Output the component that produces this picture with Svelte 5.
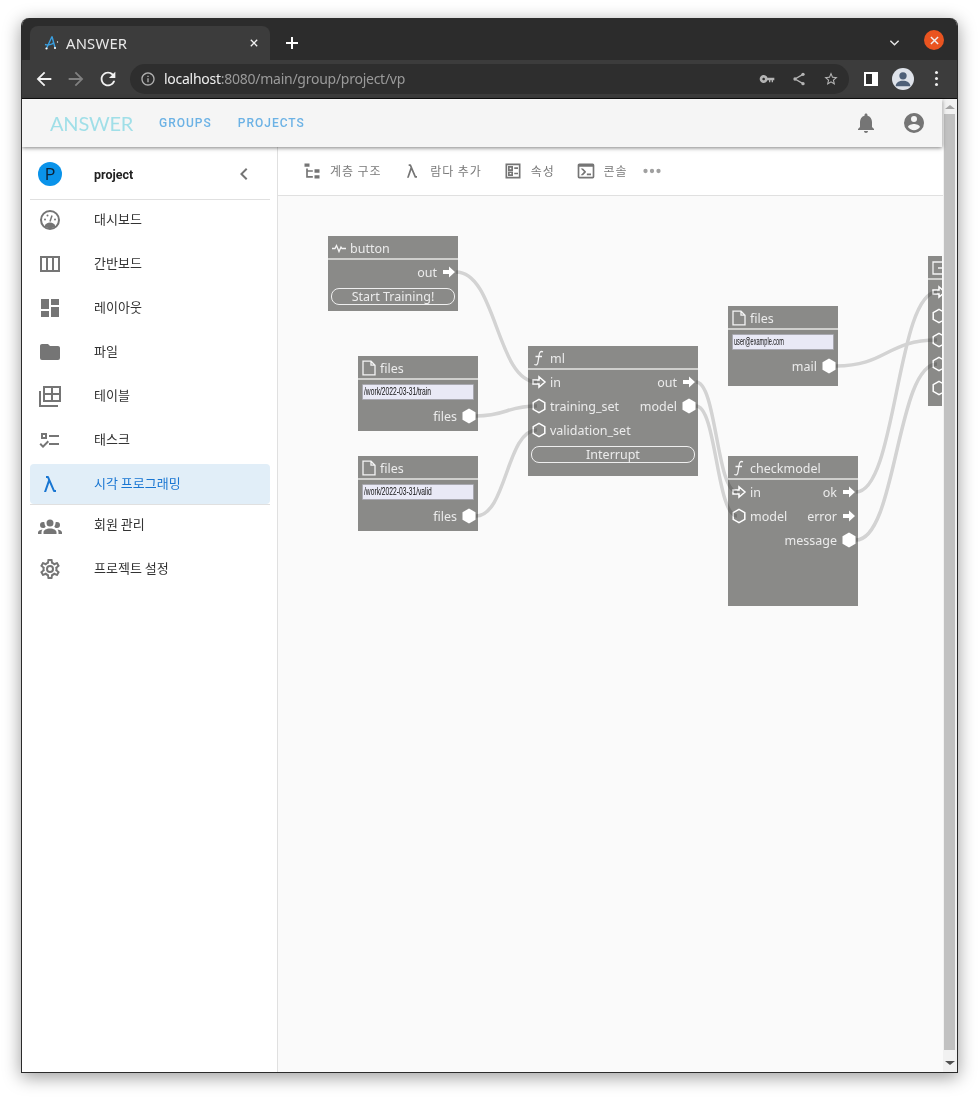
<script>
  const menu = [
    { label: '대시보드', icon: 'gauge' },
    { label: '간반보드', icon: 'columns' },
    { label: '레이아웃', icon: 'layout' },
    { label: '파일', icon: 'folder' },
    { label: '테이블', icon: 'table' },
    { label: '태스크', icon: 'tasks' }
  ];

  const paths = {
    layout: 'M13,3V9H21V3M13,21H21V11H13M3,21H11V15H3M3,13H11V3H3V13Z',
    folder: 'M10,4H4C2.89,4 2,4.89 2,6V18A2,2 0 0,0 4,20H20A2,2 0 0,0 22,18V8C22,6.89 21.1,6 20,6H12L10,4Z',
    tasks: 'M3,5H9V11H3V5M5,7V9H7V7H5M11,7H21V9H11V7M11,15H21V17H11V15M5,20L1.5,16.5L2.91,15.09L5,17.17L9.59,12.59L11,14L5,20Z',
    lambda: 'M6,20L10.16,7.91L9.34,6H8V4H10C10.42,4 10.78,4.26 10.93,4.63L16.66,18H18V20H16C15.57,20 15.21,19.73 15.07,19.36L11.33,10.65L8.12,20H6Z',
    group: 'M12,5.5A3.5,3.5 0 0,1 15.5,9A3.5,3.5 0 0,1 12,12.5A3.5,3.5 0 0,1 8.5,9A3.5,3.5 0 0,1 12,5.5M5,8C5.56,8 6.08,8.15 6.53,8.42C6.38,9.85 6.8,11.27 7.66,12.38C7.16,13.34 6.16,14 5,14A3,3 0 0,1 2,11A3,3 0 0,1 5,8M19,8A3,3 0 0,1 22,11A3,3 0 0,1 19,14C17.84,14 16.84,13.34 16.34,12.38C17.2,11.27 17.62,9.85 17.47,8.42C17.92,8.15 18.44,8 19,8M5.5,18.25C5.5,16.18 8.41,14.5 12,14.5C15.59,14.5 18.5,16.18 18.5,18.25V20H5.5V18.25M0,20V18.5C0,17.11 1.89,15.94 4.45,15.6C3.86,16.28 3.5,17.22 3.5,18.25V20H0M24,20H20.5V18.25C20.5,17.22 20.14,16.28 19.55,15.6C22.11,15.94 24,17.11 24,18.5V20Z',
    cog: 'M12,8A4,4 0 0,1 16,12A4,4 0 0,1 12,16A4,4 0 0,1 8,12A4,4 0 0,1 12,8M12,10A2,2 0 0,0 10,12A2,2 0 0,0 12,14A2,2 0 0,0 14,12A2,2 0 0,0 12,10M10,22C9.75,22 9.54,21.82 9.5,21.58L9.13,18.93C8.5,18.68 7.96,18.34 7.44,17.94L4.95,18.95C4.73,19.03 4.46,18.95 4.34,18.73L2.34,15.27C2.21,15.05 2.27,14.78 2.46,14.63L4.57,12.97L4.5,12L4.57,11L2.46,9.37C2.27,9.22 2.21,8.95 2.34,8.73L4.34,5.27C4.46,5.05 4.73,4.96 4.95,5.05L7.44,6.05C7.96,5.66 8.5,5.32 9.13,5.07L9.5,2.42C9.54,2.18 9.75,2 10,2H14C14.25,2 14.46,2.18 14.5,2.42L14.87,5.07C15.5,5.32 16.04,5.66 16.56,6.05L19.05,5.05C19.27,4.96 19.54,5.05 19.66,5.27L21.66,8.73C21.79,8.95 21.73,9.22 21.54,9.37L19.43,11L19.5,12L19.43,13L21.54,14.63C21.73,14.78 21.79,15.05 21.66,15.27L19.66,18.73C19.54,18.95 19.27,19.04 19.05,18.95L16.56,17.95C16.04,18.34 15.5,18.68 14.87,18.93L14.5,21.58C14.46,21.82 14.25,22 14,22H10M11.25,4L10.88,6.61C9.68,6.86 8.62,7.5 7.85,8.39L5.44,7.35L4.69,8.65L6.8,10.2C6.4,11.37 6.4,12.64 6.8,13.8L4.68,15.36L5.43,16.66L7.86,15.62C8.63,16.5 9.68,17.14 10.87,17.38L11.24,20H12.76L13.13,17.39C14.32,17.14 15.37,16.5 16.14,15.62L18.57,16.66L19.32,15.36L17.2,13.81C17.6,12.64 17.6,11.37 17.2,10.2L19.31,8.65L18.56,7.35L16.15,8.39C15.38,7.5 14.32,6.86 13.12,6.62L12.75,4H11.25Z',
    tree: 'M3,3H9V7H3V3M15,10H21V14H15V10M15,17H21V21H15V17M13,13H7V18H13V20H7L5,20V9H7V11H13V13Z',
    console: 'M20,19V7H4V19H20M20,3A2,2 0 0,1 22,5V19A2,2 0 0,1 20,21H4A2,2 0 0,1 2,19V5C2,3.89 2.9,3 4,3H20M13,17V15H18V17H13M9.58,13L5.57,9H8.4L11.7,12.3C12.09,12.69 12.09,13.33 11.7,13.72L8.42,17H5.59L9.58,13Z',
    chevron: 'M15.41 7.41L14 6l-6 6 6 6 1.41-1.41L10.83 12z',
    bell: 'M12 22c1.1 0 2-.9 2-2h-4c0 1.1.89 2 2 2zm6-6v-5c0-3.07-1.64-5.64-4.5-6.32V4c0-.83-.67-1.5-1.5-1.5s-1.5.67-1.5 1.5v.68C7.63 5.36 6 7.92 6 11v5l-2 2v1h16v-1l-2-2z',
    account: 'M12,19.2C9.5,19.2 7.29,17.92 6,16C6.03,14 10,12.9 12,12.9C14,12.9 17.97,14 18,16C16.71,17.92 14.5,19.2 12,19.2M12,5A3,3 0 0,1 15,8A3,3 0 0,1 12,11A3,3 0 0,1 9,8A3,3 0 0,1 12,5M12,2A10,10 0 0,0 2,12A10,10 0 0,0 12,22A10,10 0 0,0 22,12C22,6.47 17.5,2 12,2Z',
    back: 'M20 11H7.83l5.59-5.59L12 4l-8 8 8 8 1.41-1.41L7.83 13H20v-2z',
    forward: 'M4 11h12.17l-5.59-5.59L12 4l8 8-8 8-1.41-1.41L16.17 13H4v-2z',
    reload: 'M17.65 6.35C16.2 4.9 14.21 4 12 4c-4.42 0-7.99 3.58-7.99 8s3.57 8 7.99 8c3.73 0 6.84-2.55 7.73-6h-2.08c-.82 2.33-3.04 4-5.65 4-3.31 0-6-2.69-6-6s2.69-6 6-6c1.66 0 3.14.69 4.22 1.78L13 11h7V4l-2.35 2.35z',
    info: 'M11 7h2v2h-2zm0 4h2v6h-2zm1-9C6.48 2 2 6.48 2 12s4.48 10 10 10 10-4.48 10-10S17.52 2 12 2zm0 18c-4.41 0-8-3.59-8-8s3.59-8 8-8 8 3.59 8 8-3.59 8-8 8z',
    key: 'M12.65 10C11.83 7.67 9.61 6 7 6c-3.31 0-6 2.69-6 6s2.69 6 6 6c2.61 0 4.83-1.67 5.65-4H15v3h2v-3h2v3h2v-3h2v-4H12.65zM7 14c-1.1 0-2-.9-2-2s.9-2 2-2 2 .9 2 2-.9 2-2 2z',
    star: 'M22 9.24l-7.19-.62L12 2 9.19 8.63 2 9.24l5.46 4.73L5.82 21 12 17.27 18.18 21l-1.63-7.03L22 9.24zM12 15.4l-3.76 2.27 1-4.28-3.32-2.88 4.38-.38L12 6.1l1.71 4.04 4.38.38-3.32 2.88 1 4.28L12 15.4z',
    dots: 'M16,12A2,2 0 0,1 18,10A2,2 0 0,1 20,12A2,2 0 0,1 18,14A2,2 0 0,1 16,12M10,12A2,2 0 0,1 12,10A2,2 0 0,1 14,12A2,2 0 0,1 12,14A2,2 0 0,1 10,12M4,12A2,2 0 0,1 6,10A2,2 0 0,1 8,12A2,2 0 0,1 6,14A2,2 0 0,1 4,12Z'
  };

  const tools = [
    { label: '계층 구조', icon: 'tree' },
    { label: '람다 추가', icon: 'lambda' },
    { label: '속성', icon: 'ballot' },
    { label: '콘솔', icon: 'console' }
  ];

  // page coordinates, the canvas svg uses the same through its viewBox
  const nodes = [
    { x: 328, y: 236, w: 130, h: 75, icon: 'pulse', title: 'button', rows: [
      { right: 'out', rport: 'arrow' }, { button: 'Start Training!' } ] },
    { x: 358, y: 356, w: 120, h: 75, icon: 'file', title: 'files', rows: [
      { input: '/work/2022-03-31/train' }, { right: 'files', rport: 'hex' } ] },
    { x: 358, y: 456, w: 120, h: 75, icon: 'file', title: 'files', rows: [
      { input: '/work/2022-03-31/valid' }, { right: 'files', rport: 'hex' } ] },
    { x: 528, y: 346, w: 170, h: 130, icon: 'func', title: 'ml', rows: [
      { left: 'in', lport: 'arrowo', right: 'out', rport: 'arrow' },
      { left: 'training_set', lport: 'hexo', right: 'model', rport: 'hex' },
      { left: 'validation_set', lport: 'hexo' },
      { button: 'Interrupt' } ] },
    { x: 728, y: 306, w: 110, h: 80, icon: 'file', title: 'files', rows: [
      { input: 'user@example.com', tight: true }, { right: 'mail', rport: 'hex' } ] },
    { x: 728, y: 456, w: 130, h: 150, icon: 'func', title: 'checkmodel', rows: [
      { left: 'in', lport: 'arrowo', right: 'ok', rport: 'arrow' },
      { left: 'model', lport: 'hexo', right: 'error', rport: 'arrow' },
      { right: 'message', rport: 'hex' } ] },
    // runs off the canvas, only its ports show
    { x: 928, y: 256, w: 130, h: 150, icon: 'exit', title: '', rows: [
      { lport: 'arrowo' }, { lport: 'hexo' }, { lport: 'hexo' }, { lport: 'hexo' }, { lport: 'hexo' } ] }
  ];

  const wire = (x0, y0, x1, y1) => {
    const d = (x1 - x0) / 2;
    return `M${x0} ${y0}C${x0 + d} ${y0} ${x1 - d} ${y1} ${x1} ${y1}`;
  };

  const wires = [
    wire(456, 272, 537, 382),
    wire(476, 416, 537, 406),
    wire(476, 516, 537, 430),
    wire(696, 382, 737, 492),
    wire(696, 406, 737, 516),
    wire(836, 366, 937, 340),
    wire(856, 492, 937, 292),
    wire(856, 540, 937, 364)
  ];
</script>

{#snippet icon(name, cls = '')}
  <svg class="icon {cls}" viewBox="0 0 24 24"><path d={paths[name]} /></svg>
{/snippet}

{#snippet port(kind)}
  <svg class="port" viewBox="0 0 16 16">
    {#if kind === 'arrow'}
      <path class="fill" d="M2 6h6V2.500L14 8l-6 5.500V10H2z" />
    {:else if kind === 'arrowo'}
      <path class="line" d="M2 6h6V2.800L14 8l-6 5.200V10H2z" />
    {:else if kind === 'hex'}
      <path class="fill" d="M8 .5l6.500 3.700v7.600L8 15.500l-6.500-3.700V4.200z" />
    {:else}
      <path class="line" d="M8 1.300l5.800 3.300v6.800L8 14.700l-5.800-3.300V4.600z" />
    {/if}
  </svg>
{/snippet}

{#snippet nodeIcon(kind)}
  <svg class="nicon" viewBox="0 0 16 16">
    {#if kind === 'pulse'}
      <path d="M1 8.500h3l1.500-3 2.500 6 2-4.500 1 1.500h4" />
    {:else if kind === 'file'}
      <path d="M2 1.200h8l4 4v9.600H2zM10 1.200v4h4" />
    {:else if kind === 'func'}
      <path d="M12 1.800C9.500.8 8.500 2.500 8.200 4.500l-1.300 8C6.600 14.500 5.500 15.500 3.300 14.500M4.500 6.500h6.500" />
    {:else}
      <path d="M14 3V2H2v12h12v-1M7 8h8" />
    {/if}
  </svg>
{/snippet}

<div class="window">
  <div class="tabstrip">
    <div class="tab">
      <svg class="favicon" viewBox="0 0 16 16">
        <path d="M9 1.500L3.500 13.500M9 1.500l3 11M2 9.500c3 1 7 0 9-2" />
        <circle cx="3.500" cy="13.500" r="1.100" />
        <circle cx="12" cy="13" r="1.100" />
        <circle cx="14.500" cy="7" r=".7" />
      </svg>
      <span class="tabtitle">ANSWER</span>
      <svg class="tabx" viewBox="0 0 10 10"><path d="M1 1l8 8M9 1l-8 8" /></svg>
    </div>
    <svg class="newtab" viewBox="0 0 12 12"><path d="M6 0v12M0 6h12" /></svg>
    <svg class="caret" viewBox="0 0 12 8"><path d="M1.500 1.500L6 6l4.500-4.500" /></svg>
    <div class="close"><svg viewBox="0 0 10 10"><path d="M1 1l8 8M9 1l-8 8" /></svg></div>
  </div>

  <div class="toolbar">
    {@render icon('back', 'nav')}
    {@render icon('forward', 'nav off')}
    {@render icon('reload', 'nav')}
    <div class="omnibox">
      {@render icon('info', 'inf')}
      <span class="url"><b>localhost</b>:8080/main/group/project/vp</span>
      <span class="spacer"></span>
      {@render icon('key', 'omni')}
      <svg class="icon omni share" viewBox="0 0 24 24">
        <path d="M18 5L6 12l12 7" />
        <circle cx="18" cy="5" r="2.500" />
        <circle cx="6" cy="12" r="2.500" />
        <circle cx="18" cy="19" r="2.500" />
      </svg>
      {@render icon('star', 'omni')}
    </div>
    <div class="sidepanel"></div>
    <div class="profile">
      <svg viewBox="0 0 24 24"><circle cx="12" cy="8.500" r="4" /><path d="M4 20c0-4 4-6 8-6s8 2 8 6z" /></svg>
    </div>
    <div class="kebab"><i></i><i></i><i></i></div>
  </div>

  <div class="viewport">
    <div class="page">
      <header class="appbar">
        <span class="logo">ANSWER</span>
        <a class="link">GROUPS</a>
        <a class="link">PROJECTS</a>
        <span class="spacer"></span>
        {@render icon('bell', 'bar')}
        {@render icon('account', 'bar')}
      </header>

      <div class="body">
        <aside class="sidebar">
          <div class="project">
            <span class="avatar">P</span>
            <span class="pname">project</span>
            {@render icon('chevron', 'collapse')}
          </div>
          {#each menu as item}
            <div class="item">
              {#if item.icon === 'gauge'}
                <svg class="icon side" viewBox="0 0 24 24">
                  <circle class="ol" cx="12" cy="12" r="9" />
                  <path d="M6.500 18.500c1-3 3-4 5.500-4s4.500 1 5.500 4c-3 2.200-8 2.200-11 0z" />
                  <path class="ol thin" d="M12 13.500l2-6" />
                  <circle cx="7" cy="11.500" r="1" /><circle cx="9.500" cy="7.500" r="1" /><circle cx="17" cy="11.500" r="1" />
                </svg>
              {:else if item.icon === 'columns'}
                <svg class="icon side" viewBox="0 0 24 24">
                  <path class="ol" d="M3 5h18v14H3zM9 5v14M15 5v14" />
                </svg>
              {:else if item.icon === 'table'}
                <svg class="icon side" viewBox="0 0 24 24">
                  <path class="ol" d="M6 3h16v14H6zM6 10h16M14 3v14M2 7v15h18" />
                </svg>
              {:else}
                {@render icon(item.icon, 'side')}
              {/if}
              <span>{item.label}</span>
            </div>
          {/each}
          <div class="item active">
            {@render icon('lambda', 'side')}
            <span>시각 프로그래밍</span>
          </div>
          <div class="divider"></div>
          <div class="item under">
            {@render icon('group', 'side')}
            <span>회원 관리</span>
          </div>
          <div class="item last">
            {@render icon('cog', 'side')}
            <span>프로젝트 설정</span>
          </div>
        </aside>

        <main class="main">
          <div class="tools">
            {#each tools as t}
              <div class="tool">
                {#if t.icon === 'ballot'}
                  <svg class="icon toolicon" viewBox="0 0 24 24">
                    <path class="ol" d="M4 4h16v16H4zM7 7h4v4H7zM7 13.500h4v3.500H7zM13.500 8.500H18M13.500 15H18" />
                  </svg>
                {:else}
                  {@render icon(t.icon, 'toolicon')}
                {/if}
                <span>{t.label}</span>
              </div>
            {/each}
            {@render icon('dots', 'more')}
          </div>

          <div class="canvas">
            {#each nodes as n}
              <div class="node" style="left:{n.x - 278}px;top:{n.y - 196}px;width:{n.w}px;height:{n.h}px">
                <div class="nhead">
                  {@render nodeIcon(n.icon)}
                  <span>{n.title}</span>
                </div>
                {#each n.rows as r}
                  <div class="nrow">
                    {#if r.input}
                      <div class="ninput"><span class:tight={r.tight}>{r.input}</span></div>
                    {:else if r.button}
                      <div class="nbutton">{r.button}</div>
                    {:else}
                      {#if r.lport}
                        {@render port(r.lport)}
                        <span class="ltext">{r.left}</span>
                      {/if}
                      <span class="spacer"></span>
                      {#if r.right}
                        <span class="rtext">{r.right}</span>
                        {@render port(r.rport)}
                      {/if}
                    {/if}
                  </div>
                {/each}
              </div>
            {/each}
            <svg class="wires" viewBox="278 196 664 876">
              {#each wires as d}
                <path {d} />
              {/each}
            </svg>
          </div>
        </main>
      </div>
    </div>

    <div class="scrollbar">
      <span class="up"></span>
      <div class="thumb"></div>
      <span class="down"></span>
    </div>
  </div>
</div>

<style>
  :global(body) {
    margin: 0;
    background: #fff;
    min-height: 1097px;
  }
  .spacer {
    flex: 1;
  }
  .window {
    box-sizing: border-box;
    width: 937px;
    height: 1055px;
    margin: 18px 0 0 21px;
    border: 1px solid #2a2a2a;
    border-top: 0;
    border-radius: 8px 8px 0 0;
    box-shadow: 0 4px 18px rgba(0, 0, 0, 0.4);
    display: flex;
    flex-direction: column;
    overflow: hidden;
    font-family: "Noto Sans CJK KR", "Noto Sans", sans-serif;
  }

  /* browser chrome */
  .tabstrip {
    height: 42px;
    flex: none;
    background: #2c2c2c;
    display: flex;
    align-items: flex-end;
    padding-left: 8px;
    position: relative;
  }
  .tab {
    width: 240px;
    height: 34px;
    box-sizing: border-box;
    background: #3c3c3c;
    border-radius: 8px 8px 0 0;
    display: flex;
    align-items: center;
    padding: 0 13px;
  }
  .favicon {
    width: 16px;
    height: 16px;
    fill: #fff;
  }
  .favicon path {
    fill: none;
    stroke: #3a9fe0;
    stroke-width: 1.4;
  }
  .tabtitle {
    margin-left: 7px;
    flex: 1;
    color: #e8e8e8;
    font: 14.8px "Noto Sans", sans-serif;
    letter-spacing: 0.2px;
  }
  .tabx {
    width: 8px;
    height: 8px;
    margin-right: -1px;
  }
  .tabx path,
  .close path {
    fill: none;
    stroke: #f0f0f0;
    stroke-width: 1.6;
  }
  .newtab {
    width: 12px;
    height: 12px;
    margin: 0 0 11px 16px;
  }
  .newtab path {
    fill: none;
    stroke: #fff;
    stroke-width: 2;
  }
  .caret {
    width: 11px;
    height: 8px;
    margin: 0 0 13px 591px;
  }
  .caret path {
    fill: none;
    stroke: #e8e8e8;
    stroke-width: 1.5;
  }
  .close {
    position: absolute;
    left: 902px;
    top: 12px;
    width: 20px;
    height: 20px;
    border-radius: 50%;
    background: #e95420;
    display: flex;
    align-items: center;
    justify-content: center;
  }
  .close svg {
    width: 9px;
    height: 9px;
  }
  .toolbar {
    height: 39px;
    flex: none;
    box-sizing: border-box;
    background: #3c3c3c;
    border-bottom: 1px solid #0f0f0f;
    display: flex;
    align-items: center;
    padding: 0 0 1px 11px;
  }
  .icon {
    fill: #757575;
    display: block;
    flex: none;
  }
  .icon.nav {
    width: 22px;
    height: 22px;
    fill: #f2f2f2;
    margin-right: 10px;
  }
  .icon.nav.off {
    fill: #808080;
  }
  .omnibox {
    width: 719px;
    height: 30px;
    margin-left: 1px;
    border-radius: 15px;
    background: #2e2e2e;
    display: flex;
    align-items: center;
    padding: 0 10px 0 10px;
    box-sizing: border-box;
  }
  .icon.inf {
    width: 16px;
    height: 16px;
    fill: #b0b0b0;
  }
  .url {
    margin-left: 8px;
    font: 14px "Noto Sans", sans-serif;
    color: #9a9a9a;
    letter-spacing: -0.26px;
  }
  .url b {
    font-weight: 400;
    color: #efefef;
  }
  .icon.omni {
    width: 16px;
    height: 16px;
    fill: #b4b4b4;
    margin-left: 16px;
  }
  .icon.share path {
    fill: none;
    stroke: #b4b4b4;
    stroke-width: 2;
  }
  .icon.share circle {
    fill: #b4b4b4;
  }
  .sidepanel {
    box-sizing: border-box;
    width: 14px;
    height: 14px;
    margin-left: 15px;
    background: #2e2e2e;
    border: 2px solid #fff;
    border-right-width: 6px;
  }
  .profile {
    width: 22px;
    height: 22px;
    margin-left: 14px;
    border-radius: 50%;
    background: #dfe3ea;
    overflow: hidden;
  }
  .profile svg {
    display: block;
    fill: #4f6078;
  }
  .kebab {
    margin-left: 21px;
    display: flex;
    flex-direction: column;
    gap: 3px;
  }
  .kebab i {
    display: block;
    width: 3px;
    height: 3px;
    border-radius: 50%;
    background: #f0f0f0;
  }

  .viewport {
    flex: 1;
    min-height: 0;
    display: flex;
  }
  .page {
    flex: 1;
    min-width: 0;
    display: flex;
    flex-direction: column;
  }
  .appbar {
    height: 48px;
    flex: none;
    background: #f5f5f5;
    box-shadow: 0 1px 4px rgba(0, 0, 0, 0.5);
    display: flex;
    align-items: center;
    padding: 0 16px 0 28px;
    position: relative;
    z-index: 1;
    margin-right: 1px;
  }
  .logo {
    width: 83px;
    margin-right: 26px;
    color: #a0dfe8;
    font: 400 20px Lato, sans-serif;
    letter-spacing: -0.2px;
    white-space: nowrap;
  }
  .link {
    font: 500 12px Roboto, sans-serif;
    letter-spacing: 1px;
    color: #6cb2e5;
    margin-right: 26px;
  }
  .icon.bar {
    width: 24px;
    height: 24px;
    margin-left: 24px;
  }

  .body {
    flex: 1;
    min-height: 0;
    display: flex;
  }
  .sidebar {
    width: 256px;
    flex: none;
    box-sizing: border-box;
    background: #fff;
    border-right: 1px solid #e0e0e0;
    padding: 0 7px 0 8px;
  }
  .project {
    height: 53px;
    margin-bottom: -2px;
    box-sizing: border-box;
    border-bottom: 1px solid #e0e0e0;
    display: flex;
    align-items: center;
    padding: 2px 0 0 8px;
  }
  .avatar {
    width: 24px;
    height: 24px;
    border-radius: 50%;
    background: #0a93ea;
    color: #0d2238;
    font: 16px Roboto, sans-serif;
    display: flex;
    align-items: center;
    justify-content: center;
  }
  .pname {
    margin-left: 32px;
    width: 138px;
    font: 700 12.5px Roboto, sans-serif;
    color: #222;
  }
  .icon.collapse {
    width: 24px;
    height: 24px;
  }
  .item {
    height: 44px;
    display: flex;
    align-items: center;
    padding-left: 8px;
    font-size: 13px;
    color: #333;
  }
  .item span {
    margin-left: 32px;
    margin-top: -3px;
  }
  .item.active {
    height: 40px;
    margin-top: 2px;
    background: #e1eef8;
    border-radius: 4px;
    color: #1976d2;
  }
  .item.active .icon {
    fill: #1976d2;
  }
  .item.under {
    margin-top: -1px;
  }
  .item.under span {
    margin-top: -5px;
  }
  .item.last {
    margin-top: -1px;
  }
  .divider {
    height: 1px;
    background: #e0e0e0;
  }
  .icon.side {
    width: 24px;
    height: 24px;
  }
  .icon .ol {
    fill: none;
    stroke: #757575;
    stroke-width: 2;
  }
  .icon.side .thin {
    stroke-width: 1.5;
  }

  .main {
    flex: 1;
    min-width: 0;
    display: flex;
    flex-direction: column;
    background: #fafafa;
  }
  .tools {
    height: 49px;
    flex: none;
    box-sizing: border-box;
    background: #fff;
    border-bottom: 1px solid #e0e0e0;
    display: flex;
    align-items: center;
    padding: 0 0 0 24px;
  }
  .tool {
    display: flex;
    align-items: center;
    margin-right: 21px;
    color: #7a7a7a;
    font-size: 12px;
    letter-spacing: 0.9px;
  }
  .tool span {
    margin-left: 8px;
    margin-top: -2px;
  }
  .icon.toolicon {
    width: 20px;
    height: 20px;
  }
  .icon.more {
    width: 26px;
    height: 26px;
    fill: #a0a0a0;
    margin-left: -10px;
  }

  /* diagram */
  .canvas {
    flex: 1;
    position: relative;
    overflow: hidden;
    margin-right: 1px;
  }
  .wires {
    position: absolute;
    inset: 0;
    width: 664px;
    height: 876px;
    mix-blend-mode: multiply;
    pointer-events: none;
  }
  .wires path {
    fill: none;
    stroke: #d8d8d8;
    stroke-width: 3.5;
  }
  .node {
    position: absolute;
    background: #8a8a88;
    color: #ebebeb;
    font: 12.5px "Noto Sans", sans-serif;
    display: flex;
    flex-direction: column;
  }
  .nhead {
    height: 24px;
    flex: none;
    box-sizing: border-box;
    border-bottom: 2px solid #cfcfcd;
    padding: 2px 0 0 3px;
    display: flex;
    align-items: center;
  }
  .nhead span {
    margin-left: 3px;
  }
  .nicon {
    width: 16px;
    height: 16px;
    flex: none;
  }
  .nicon path {
    fill: none;
    stroke: #f4f4f4;
    stroke-width: 1.300;
  }
  .nrow {
    height: 24px;
    flex: none;
    box-sizing: border-box;
    padding: 0 1px 0 3px;
    display: flex;
    align-items: center;
  }
  .port {
    width: 16px;
    height: 16px;
    flex: none;
  }
  .port .fill {
    fill: #fff;
  }
  .port .line {
    fill: none;
    stroke: #fff;
    stroke-width: 1.500;
  }
  .ltext {
    margin-left: 3px;
  }
  .rtext {
    margin-right: 4px;
  }
  .ninput {
    box-sizing: border-box;
    flex: 1;
    min-width: 0;
    height: 16px;
    margin: 0 3px 0 1px;
    padding-left: 1px;
    background: #e9e9f6;
    border: 1px solid #a8a8b0;
    border-radius: 1px;
    color: #111;
    font: 10px/14px "Liberation Sans", sans-serif;
    white-space: nowrap;
  }
  .ninput span {
    display: inline-block;
    transform: scaleX(0.67);
    transform-origin: left center;
  }
  .ninput span.tight {
    transform: scaleX(0.56);
  }
  .nbutton {
    box-sizing: border-box;
    flex: 1;
    height: 17px;
    margin-right: 2px;
    border: 1px solid #efefef;
    border-radius: 8px;
    text-align: center;
    line-height: 15px;
  }

  .scrollbar {
    width: 14px;
    flex: none;
    background: #f1f1f1;
    display: flex;
    flex-direction: column;
    position: relative;
  }
  .thumb {
    width: 11px;
    margin: 15px 0 0 1px;
    height: 936px;
    background: #c1c1c1;
  }
  .up,
  .down {
    position: absolute;
    left: 2px;
    width: 0;
    height: 0;
    border-left: 5px solid transparent;
    border-right: 5px solid transparent;
  }
  .up {
    top: 6px;
    border-bottom: 4px solid #a3a3a3;
  }
  .down {
    bottom: 7px;
    border-top: 4px solid #505050;
  }
</style>
